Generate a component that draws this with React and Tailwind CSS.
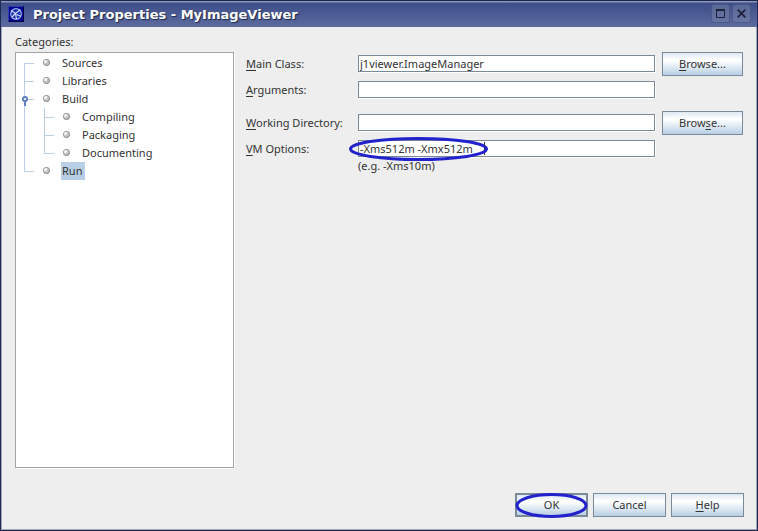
import React from "react";

const categories = [
  { label: "Sources", depth: 0, position: "first" },
  { label: "Libraries", depth: 0, position: "middle" },
  { label: "Build", depth: 0, position: "middle", open: true },
  { label: "Compiling", depth: 1, position: "middle" },
  { label: "Packaging", depth: 1, position: "middle" },
  { label: "Documenting", depth: 1, position: "last" },
  { label: "Run", depth: 0, position: "last", selected: true },
];

function Bullet({ x }) {
  return (
    <g>
      <circle cx={x} cy="8.5" r="3.1" fill="url(#bullet)" stroke="#808080" strokeWidth="0.9" />
      <circle cx={x - 1} cy="7.5" r="1.2" fill="#fff" />
    </g>
  );
}

function Branches({ node }) {
  const nested = node.depth === 1;
  const x = nested ? 28 : 8;
  const top = node.position === "first" ? 9 : 0;
  const bottom = node.position === "last" ? 10 : 18;
  return (
    <svg
      className={nested ? "h-[18px] w-[65px] shrink-0" : "h-[18px] w-[45px] shrink-0"}
      viewBox={nested ? "0 0 65 18" : "0 0 45 18"}
      aria-hidden="true"
    >
      <defs>
        <linearGradient id="bullet" x1="0" y1="0" x2="1" y2="1">
          <stop offset="0" stopColor="#f4f4f4" />
          <stop offset="1" stopColor="#a8a8a8" />
        </linearGradient>
      </defs>
      <g fill="#b8cfe5">
        {nested && <rect x="8" y="0" width="1" height="18" />}
        <rect x={x} y={top} width="1" height={bottom - top} />
        <rect x={x} y="9" width="10" height="1" />
      </g>
      {node.open && (
        <g>
          <rect x="8" y="11" width="2" height="5" fill="#6382bf" />
          <circle cx="9" cy="9" r="2.1" fill="#fff" stroke="#6382bf" strokeWidth="2" />
        </g>
      )}
      <Bullet x={nested ? 50.5 : 30.5} />
    </svg>
  );
}

function Button({ children, className = "" }) {
  return (
    <button
      type="button"
      className={`h-6 border-[#7a8a99] bg-[linear-gradient(to_bottom,#dde8f3_0%,#ffffff_32%,#f4f8fb_45%,#b8cfe5_100%)] text-center leading-[20px] ${className}`}
    >
      {children}
    </button>
  );
}

function Field({ id, value = "" }) {
  return (
    <input
      id={id}
      type="text"
      defaultValue={value}
      className="mb-px block h-[17px] w-full min-w-0 border border-[#7a8a99] bg-white px-px shadow-[1px_1px_0_#ffffff] outline-none"
    />
  );
}

function Label({ htmlFor, first, rest }) {
  return (
    <label htmlFor={htmlFor} className="whitespace-nowrap">
      <u className="underline-offset-2">{first}</u>
      {rest}
    </label>
  );
}

function TitleButton({ label, children }) {
  return (
    <button
      type="button"
      aria-label={label}
      className="flex h-[19px] w-[19px] items-center justify-center rounded-[3px] border border-[#4a5889] bg-[linear-gradient(to_bottom,#5a6898,#6875a3)]"
    >
      {children}
    </button>
  );
}

export default function App() {
  return (
    <div className="flex min-h-screen flex-col border-x border-b border-[#1e2a52] bg-[#eeeeee] font-['Noto_Sans',sans-serif] text-[11px] leading-[18px] text-[#333333]">
      <header className="flex h-[27px] items-start border-t border-[#1c2648] bg-[linear-gradient(to_bottom,#8d97bd_0px,#8d97bd_1px,#3d4d88_2px,#5d6b9f_100%)] pl-[7px] pr-[6px] pt-[3px]">
        <svg className="mt-[2px] h-4 w-4 shrink-0" viewBox="0 0 16 16" aria-hidden="true">
          <rect width="16" height="16" fill="#00008a" />
          <path d="M.5 15.5V.5h15" fill="none" stroke="#5c78d8" strokeDasharray="1 1" />
          <path d="M.5 15.5h15V.5" fill="none" stroke="#000048" />
          <circle cx="8" cy="8" r="5.300" fill="#1a2fa6" stroke="#9db4f0" strokeWidth="1.200" />
          <path d="M3 4.500 7.500 7.500 12.500 3.500M7.500 7.500 8.500 13M8.500 8.500 12.500 10M4 11l3.500-3.500" fill="none" stroke="#c8d8ff" strokeWidth="1.200" />
        </svg>
        <h1 className="ml-[9px] mt-[2px] flex-1 whitespace-nowrap font-['DejaVu_Sans',sans-serif] text-[13px] font-bold text-white [text-shadow:1px_1px_1px_#1c2648]">
          Project Properties - MyImageViewer
        </h1>
        <div className="flex gap-[2px]">
          <TitleButton label="Maximize">
            <svg className="h-[9px] w-[9px]" viewBox="0 0 9 9">
              <path d="M.5 1v7.500h8V1" fill="none" stroke="#1d2238" />
              <path d="M0 1h9" stroke="#1d2238" strokeWidth="2" />
            </svg>
          </TitleButton>
          <TitleButton label="Close">
            <svg className="h-[9px] w-[9px]" viewBox="0 0 9 9">
              <path d="m.7.7 7.600 7.600m0-7.600L.7 8.300" stroke="#1d2238" strokeWidth="1.700" />
            </svg>
          </TitleButton>
        </div>
      </header>

      <div className="flex flex-1 flex-col border-x border-b border-[#a3a7b5] pb-3 pl-[13px] pr-3 pt-[6px]">
        <h2 id="categories" className="mb-px">
          Categories:
        </h2>
        <main className="flex flex-1 gap-3 pr-px">
          <ul
            aria-labelledby="categories"
            className="min-h-[416px] w-[219px] shrink-0 self-start border border-[#a3a3a3] bg-white pt-px shadow-[1px_1px_0_#ffffff]"
          >
            {categories.map((node) => (
              <li key={node.label} className="flex h-[18px]">
                <Branches node={node} />
                <span className={node.selected ? "bg-[#b8cfe5] pl-px pr-[3px]" : "pl-px"}>
                  {node.label}
                </span>
              </li>
            ))}
          </ul>

          <form className="flex min-w-0 flex-1 flex-col">
            <div className="grid grid-cols-[105px_1fr_81px] items-center gap-x-[7px]">
              <Label htmlFor="main" first="M" rest="ain Class:" />
              <Field id="main" value="j1viewer.ImageManager" />
              <Button className="border">
                <u className="underline-offset-2">B</u>rowse...
              </Button>
            </div>
            <div className="mt-[5px] grid grid-cols-[105px_1fr_81px] items-center gap-x-[7px]">
              <Label htmlFor="args" first="A" rest="rguments:" />
              <Field id="args" />
            </div>
            <div className="mt-3 grid grid-cols-[105px_1fr_81px] items-center gap-x-[7px]">
              <Label htmlFor="dir" first="W" rest="orking Directory:" />
              <Field id="dir" />
              <Button className="border">
                Brow<u className="underline-offset-2">s</u>e...
              </Button>
            </div>
            <div className="mt-[5px] grid grid-cols-[105px_1fr_81px] items-center gap-x-[7px]">
              <Label htmlFor="vm" first="V" rest="M Options:" />
              <div className="relative">
                <Field id="vm" value="-Xms512m -Xmx512m" />
                <svg
                  className="pointer-events-none absolute -left-[10px] -top-1 h-[26px] w-[141px]"
                  viewBox="0 0 141 26"
                  aria-hidden="true"
                >
                  <rect x="136" y="6" width="1" height="13" fill="#333333" />
                  <ellipse cx="70.500" cy="13" rx="68" ry="10.500" fill="none" stroke="#2222cc" strokeWidth="3" />
                </svg>
              </div>
            </div>
            <p className="ml-[112px] leading-4">(e.g. -Xms10m)</p>
          </form>
        </main>

        <footer className="flex justify-end gap-[5px]">
          <div className="relative">
            <Button className="block w-[73px] border-2">OK</Button>
            <svg
              className="pointer-events-none absolute left-0 top-0 h-[25px] w-[73px] overflow-visible"
              viewBox="0 0 73 25"
              aria-hidden="true"
            >
              <ellipse cx="36.500" cy="12.500" rx="34.500" ry="11" fill="none" stroke="#2222cc" strokeWidth="3" />
            </svg>
          </div>
          <Button className="w-[73px] border">Cancel</Button>
          <Button className="w-[73px] border">
            <u className="underline-offset-2">H</u>elp
          </Button>
        </footer>
      </div>
    </div>
  );
}
